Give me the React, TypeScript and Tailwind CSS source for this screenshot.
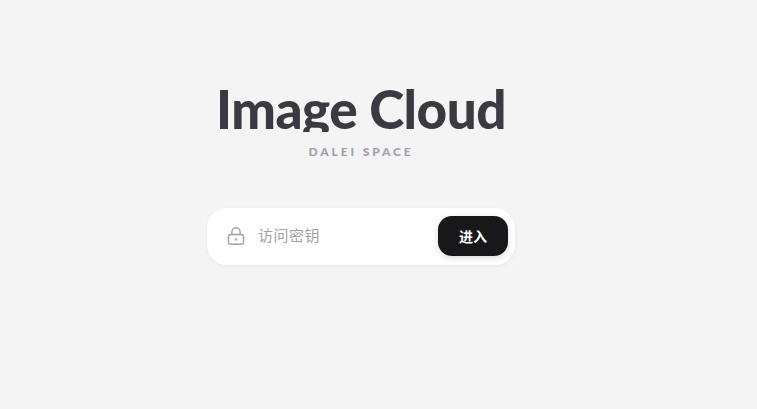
export default function App() {
  return (
    <div className="flex h-[409px] w-full flex-col items-center overflow-hidden bg-[#f4f4f5] pt-[80px] pr-[35px] font-['Noto_Sans','Noto_Sans_CJK_SC',sans-serif]">
      <div className="flex flex-col items-center">
        <h1 className="h-[52px] overflow-hidden font-['Lato',sans-serif] text-[53px] leading-[58px] font-black tracking-[-0.5px] whitespace-nowrap text-[#3a3a40]">
          Image Cloud
        </h1>
        <p className="mt-[12px] font-['Lato',sans-serif] text-[12px] leading-[16px] font-black tracking-[0.24em] text-[#a1a1aa]">
          DALEI SPACE
        </p>
      </div>
      <form className="mt-[48px] flex h-[57px] w-[308px] items-center rounded-[20px] bg-white pr-[7px] pl-[20px] shadow-[0_1px_4px_rgba(0,0,0,0.06)]">
        <svg
          width="18"
          height="18"
          viewBox="0 0 24 24"
          fill="none"
          stroke="#a1a1aa"
          strokeWidth="2"
          strokeLinecap="round"
          strokeLinejoin="round"
          className="mb-[1px] shrink-0"
        >
          <rect x="2" y="10" width="20" height="13" rx="3" />
          <path d="M6.5 10V6.5a5.5 5.5 0 0 1 11 0V10" />
          <circle cx="12" cy="16.5" r="0.6" />
        </svg>
        <span className="mb-[2px] ml-[13px] flex-1 text-[15px] tracking-[0.5px] text-[#a1a1aa]">访问密钥</span>
        <button
          type="button"
          className="mb-[1px] h-[40px] w-[70px] rounded-[14px] bg-[#18181b] text-[14px] font-bold text-white shadow-[0_2px_6px_rgba(0,0,0,0.15)]"
        >
          进入
        </button>
      </form>
    </div>
  );
}
